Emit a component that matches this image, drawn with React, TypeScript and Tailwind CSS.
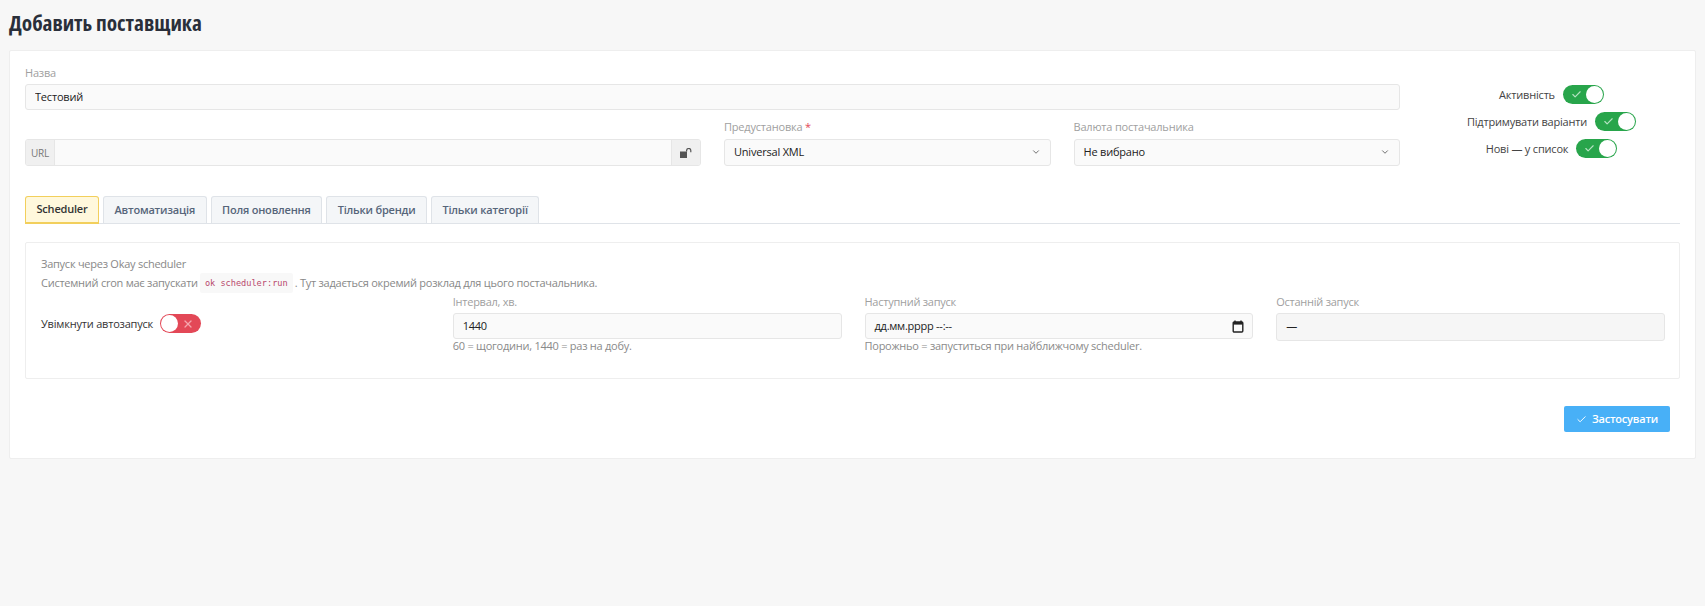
import { Check, ChevronDown, X } from "lucide-react";

const tabs = ["Автоматизація", "Поля оновлення", "Тільки бренди", "Тільки категорії"];

function Toggle({ on }: { on: boolean }) {
	if (on) {
		return (
			<span className="flex h-[19px] w-[41px] shrink-0 items-center justify-between rounded-full bg-[#28a54b] pl-[8px] pr-[1px]">
				<Check size={11} strokeWidth={2.5} className="text-[#b5e2c2]" />
				<span className="h-[17px] w-[17px] rounded-full bg-white" />
			</span>
		);
	}
	return (
		<span className="flex h-[19px] w-[41px] shrink-0 items-center justify-between rounded-full bg-[#e34857] pl-[1px] pr-[7px]">
			<span className="h-[17px] w-[17px] rounded-full bg-white" />
			<X size={12} strokeWidth={2.5} className="text-[#f5a5ad]" />
		</span>
	);
}

function Field({ value }: { value: string }) {
	return (
		<div className="flex h-[27px] items-center justify-between rounded-[3px] border border-[#e6e6e6] bg-[#fafafa] pb-[2px] pl-[9px] pr-[9px] text-[#222]">
			<span>{value}</span>
			<ChevronDown size={10} className="text-[#555]" />
		</div>
	);
}

export default function App() {
	return (
		<div className="min-h-[606px] bg-[#f7f7f7] pl-[9px] pr-[9px] pt-[9px] font-['Open_Sans',sans-serif] text-[11px] leading-[16px] tracking-[-0.2px]">
			<h1 className="mb-[13px] h-[28px] text-[21.3px] font-bold leading-[28px] tracking-normal text-[#2a2f3a] [font-stretch:75%]">Добавить поставщика</h1>
			<div className="h-[409px] rounded-[2px] border border-[#eeeeee] bg-white pl-[15px] pr-[15px] pt-[14px]">
				<div className="flex gap-[23px]">
					<div className="w-[1375px] shrink-0">
						<div className="mb-[3px] text-[#a0a0a0]">Назва</div>
						<input
							readOnly
							defaultValue="Тестовий"
							className="block h-[26px] w-full rounded-[3px] border border-[#e6e6e6] bg-[#fafafa] px-[9px] pb-[2px] text-[#222] outline-none"
						/>
						<div className="mt-[9px] grid grid-cols-[676px_1fr_1fr] gap-x-[23px]">
							<div className="flex h-[27px] self-end overflow-hidden rounded-[3px] border border-[#e6e6e6] bg-[#fafafa]">
								<span className="flex w-[29px] items-center justify-center border-r border-[#e6e6e6] bg-[#f0f0f0] text-[10px] text-[#777]">URL</span>
								<span className="flex-1" />
								<span className="flex w-[29px] items-center justify-center border-l border-[#e6e6e6] bg-[#f0f0f0]">
									<svg width="12" height="10" viewBox="0 0 12 10">
										<rect x="0" y="3.5" width="7" height="6.5" fill="#555" />
										<path d="M6.6 3.5V2.6a2.1 2.1 0 0 1 4.2 0V4.2" fill="none" stroke="#555" strokeWidth="1.2" />
									</svg>
								</span>
							</div>
							<div>
								<div className="mb-[4px] text-[#a0a0a0]">
									Предустановка <span className="text-[#e34857]">*</span>
								</div>
								<Field value="Universal XML" />
							</div>
							<div>
								<div className="mb-[4px] text-[#a0a0a0]">Валюта постачальника</div>
								<Field value="Не вибрано" />
							</div>
						</div>
					</div>
					<div className="mt-[20px] flex flex-1 flex-col items-center gap-[8px] text-[#444]">
						<label className="flex items-center gap-[8px]">Активність <Toggle on /></label>
						<label className="flex items-center gap-[8px]">Підтримувати варіанти <Toggle on /></label>
						<label className="flex items-center gap-[8px]">Нові — у список <Toggle on /></label>
					</div>
				</div>

				<div className="mt-[30px] flex h-[28px] items-stretch gap-[4px] border-b border-[#dfe3e8]">
					<div className="flex h-[28px] w-[74px] items-center justify-center rounded-t-[3px] border border-b-2 border-[#f2cf5c] bg-[#fff8dc] pb-[1px] font-semibold text-[#333]">Scheduler</div>
					{tabs.map((tab) => (
						<div key={tab} className="flex h-[27px] items-center rounded-t-[3px] border border-b-0 border-[#dfe3e8] bg-[#f4f6f8] px-[10.5px] pb-[1px] font-semibold text-[#56657a]">
							{tab}
						</div>
					))}
				</div>

				<div className="mt-[18px] h-[137px] rounded-[2px] border border-[#eeeeee] pl-[15px] pr-[14px] pt-[12px] tracking-[-0.25px] text-[#888]">
					<div className="leading-[18px]">Запуск через Okay scheduler</div>
					<div className="flex items-center leading-[18px]">
						Системний cron має запускати
						<code className="mx-[2px] rounded-[2px] bg-[#f8f8f8] px-[5px] py-[1px] font-['DejaVu_Sans_Mono',monospace] text-[8.6px] tracking-normal text-[#b84a6e]">ok scheduler:run</code>
						. Тут задається окремий розклад для цього постачальника.
					</div>
					<div className="mt-[1px] grid grid-cols-4 gap-x-[23px]">
						<label className="mt-[20px] flex h-[19px] items-center gap-[7px] tracking-[-0.2px] text-[#333]">Увімкнути автозапуск <Toggle on={false} /></label>
						<div>
							<div className="mb-[3px] text-[#a0a0a0]">Інтервал, хв.</div>
							<input readOnly defaultValue="1440" className="block h-[26px] w-full rounded-[3px] border border-[#e6e6e6] bg-[#fafafa] px-[9px] pb-[1px] text-[#222] outline-none" />
							<div className="mt-[-1px] text-[#8a8a8a]">60 = щогодини, 1440 = раз на добу.</div>
						</div>
						<div>
							<div className="mb-[3px] text-[#a0a0a0]">Наступний запуск</div>
							<div className="flex h-[26px] items-center justify-between rounded-[3px] border border-[#e6e6e6] bg-[#fafafa] pl-[9px] pr-[8px] text-[#222]">
								<span>дд.мм.рррр --:--</span>
								<svg width="12" height="13" viewBox="0 0 12 13">
									<path d="M3 0.5v2M9 0.5v2" stroke="#222" strokeWidth="1.4" />
									<rect x="1.2" y="2" width="9.6" height="10" rx="1" fill="none" stroke="#222" strokeWidth="1.4" />
									<rect x="1.2" y="2" width="9.6" height="2.6" fill="#222" />
								</svg>
							</div>
							<div className="mt-[-1px] text-[#8a8a8a]">Порожньо = запуститься при найближчому scheduler.</div>
						</div>
						<div>
							<div className="mb-[3px] text-[#a0a0a0]">Останній запуск</div>
							<div className="flex h-[28px] items-center rounded-[3px] border border-[#e6e6e6] bg-[#f6f6f6] px-[9px] pb-[2px] text-[#222]">—</div>
						</div>
					</div>
				</div>

				<div className="mt-[27px] flex justify-end pr-[10px]">
					<button className="flex h-[26px] w-[106px] items-center justify-center gap-[5px] rounded-[2px] bg-[#48b0f7] font-semibold text-white">
						<Check size={11} strokeWidth={2} />
						Застосувати
					</button>
				</div>
			</div>
		</div>
	);
}
